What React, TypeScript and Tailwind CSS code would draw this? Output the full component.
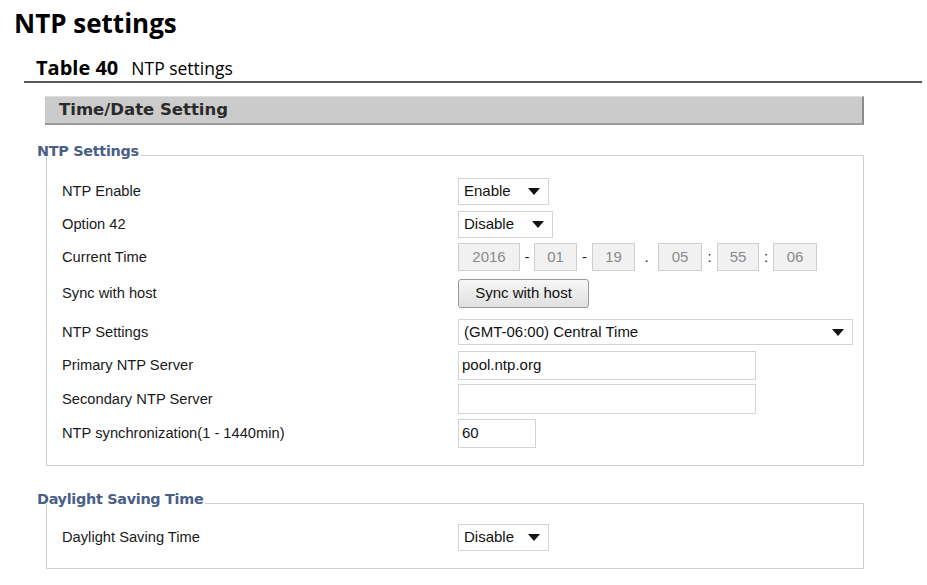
import React from 'react';

const labelFont = { fontFamily: '"Liberation Sans", Arial, sans-serif' };

const Arrow: React.FC = () => (
  <svg width="12" height="7" viewBox="0 0 12 7" className="shrink-0">
    <path d="M0 0 L12 0 L6 7 Z" fill="#111" />
  </svg>
);

const SelectBox: React.FC<{ value: string; width: string }> = ({ value, width }) => (
  <div className={`${width} h-full flex items-center justify-between border border-[#d4d4d4] bg-white pl-[5px] pr-[8px] text-[15px] text-[#111]`}>
    <span>{value}</span>
    <Arrow />
  </div>
);

const TextBox: React.FC<{ value?: string; width: string }> = ({ value, width }) => (
  <div className={`${width} h-full flex items-center border border-[#d4d4d4] bg-white pl-[3px] text-[15px] text-[#111]`}>
    {value}
  </div>
);

const DateBox: React.FC<{ value: string; width: string }> = ({ value, width }) => (
  <div className={`${width} h-full flex items-center justify-center border border-[#cfcfcf] bg-[#f1f1f1] text-[15px] text-[#8a8a8a]`}>
    {value}
  </div>
);

const Sep: React.FC<{ ch: string; width: string }> = ({ ch, width }) => (
  <div className={`${width} text-center text-[15px] text-[#222]`}>{ch}</div>
);

const Row: React.FC<{ label: string; h: string; mt?: string; children: React.ReactNode }> = ({ label, h, mt = '', children }) => (
  <div className={`flex items-center ${h} ${mt}`}>
    <div className="w-[396px] shrink-0 text-[14.7px] text-[#1a1a1a]">{label}</div>
    <div className="flex items-center h-full">{children}</div>
  </div>
);

const Section: React.FC<{ title: string; pt: string; children: React.ReactNode }> = ({ title, pt, children }) => (
  <div className="w-[827px]">
    <div className="flex items-end h-[14px]">
      <span className="mb-[-2px] text-[14.4px] font-bold leading-none text-[#4a5f86] whitespace-nowrap" style={{ fontFamily: '"DejaVu Sans", Verdana, sans-serif', letterSpacing: '-0.3px' }}>
        {title}
      </span>
      <div className="flex-1 self-stretch border-b border-[#cfcfcf] ml-[2px]" />
    </div>
    <div className={`ml-[9px] border-x border-b border-[#cfcfcf] pl-[15px] ${pt} pb-[17px]`}>{children}</div>
  </div>
);

export default function App() {
  return (
    <div className="w-[927px] h-[585px] bg-white overflow-hidden" style={labelFont}>
      <h1
        className="pl-[14px] pt-[5px] text-[26px] font-bold leading-[36px] text-black"
        style={{ fontFamily: '"Open Sans", sans-serif' }}
      >
        NTP settings
      </h1>
      <div className="ml-[24px] w-[898px] mt-[16px] border-b-2 border-[#5a5a5a] pl-[12px] pb-[1px] leading-[22px]" style={{ fontFamily: '"Open Sans", sans-serif' }}>
        <span className="font-bold text-[20px]">Table 40</span>
        <span className="ml-[13px] text-[17.5px]">NTP settings</span>
      </div>

      <div className="ml-[45px] mt-[13px] w-[819px] h-[29px] flex items-center bg-[#cbcbcb] border-t border-[#dedede] border-r-2 border-b-2 border-r-[#8c8c8c] border-b-[#9a9a9a] pl-[14px]">
        <span className="text-[16.5px] font-bold text-[#2a2a2a]" style={{ fontFamily: '"DejaVu Sans", Verdana, sans-serif' }}>
          Time/Date Setting
        </span>
      </div>

      <div className="ml-[37px] mt-[17px]">
        <Section title="NTP Settings" pt="pt-[22px]">
          <Row label="NTP Enable" h="h-[27px]">
            <SelectBox value="Enable" width="w-[91px]" />
          </Row>
          <Row label="Option 42" h="h-[27px]" mt="mt-[6px]">
            <SelectBox value="Disable" width="w-[95px]" />
          </Row>
          <Row label="Current Time" h="h-[28px]" mt="mt-[5px]">
            <DateBox value="2016" width="w-[62px]" />
            <Sep ch="-" width="w-[14px]" />
            <DateBox value="01" width="w-[43px]" />
            <Sep ch="-" width="w-[15px]" />
            <DateBox value="19" width="w-[43px]" />
            <Sep ch="." width="w-[23px]" />
            <DateBox value="05" width="w-[44px]" />
            <Sep ch=":" width="w-[15px]" />
            <DateBox value="55" width="w-[42px]" />
            <Sep ch=":" width="w-[14px]" />
            <DateBox value="06" width="w-[44px]" />
          </Row>
          <Row label="Sync with host" h="h-[29px]" mt="mt-[8px]">
            <div className="w-[131px] h-full flex items-center justify-center rounded-[3px] border border-[#9a9a9a] bg-gradient-to-b from-[#f7f7f7] to-[#e0e0e0] text-[15px] text-[#111]">
              Sync with host
            </div>
          </Row>
          <Row label="NTP Settings" h="h-[26px]" mt="mt-[11px]">
            <SelectBox value="(GMT-06:00) Central Time" width="w-[395px]" />
          </Row>
          <Row label="Primary NTP Server" h="h-[29px]" mt="mt-[6px]">
            <TextBox value="pool.ntp.org" width="w-[298px]" />
          </Row>
          <Row label="Secondary NTP Server" h="h-[30px]" mt="mt-[4px]">
            <TextBox width="w-[298px]" />
          </Row>
          <Row label="NTP synchronization(1 - 1440min)" h="h-[29px]" mt="mt-[5px]">
            <TextBox value="60" width="w-[78px]" />
          </Row>
        </Section>
      </div>

      <div className="ml-[37px] mt-[24px]">
        <Section title="Daylight Saving Time" pt="pt-[20px]">
          <Row label="Daylight Saving Time" h="h-[27px]">
            <SelectBox value="Disable" width="w-[91px]" />
          </Row>
        </Section>
      </div>
    </div>
  );
}
